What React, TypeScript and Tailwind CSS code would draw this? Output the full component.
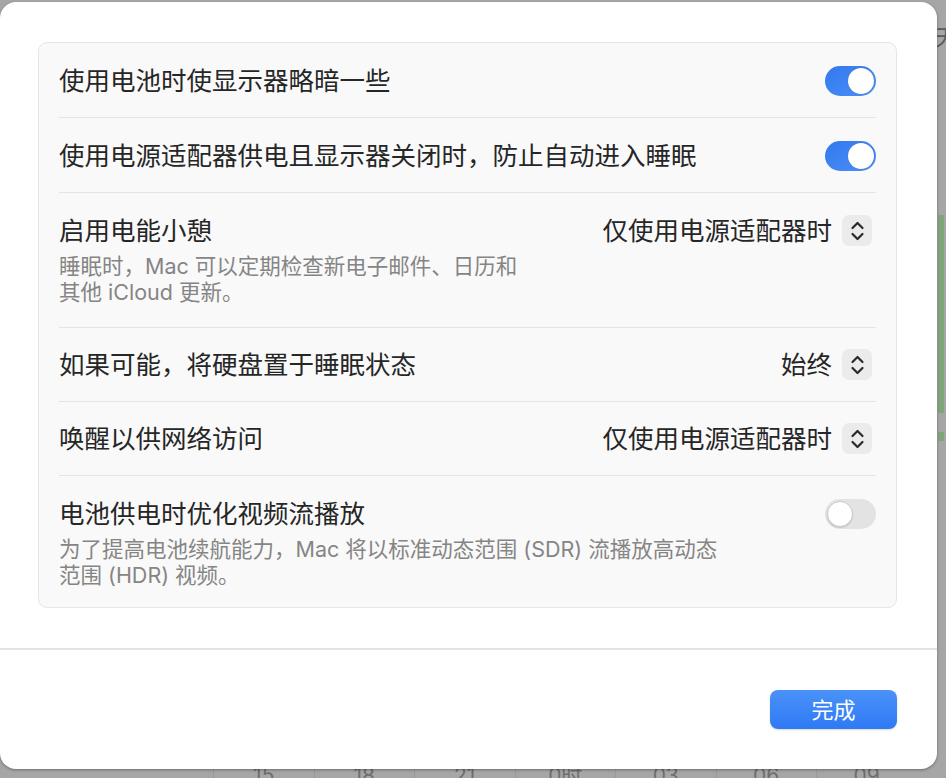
import React from 'react';

const FONT = 'font-["Inter","Noto_Sans_CJK_SC",sans-serif]';

function Toggle({ on }: { on: boolean }) {
  return on ? (
    <div className="w-[51px] h-[30px] rounded-full bg-gradient-to-br from-[#3479ef] to-[#4a8ff6] p-[2px] flex justify-end">
      <div className="w-[26px] h-[26px] rounded-full bg-white shadow-[0_0_1px_rgba(0,0,0,0.3)]" />
    </div>
  ) : (
    <div className="w-[51px] h-[30px] rounded-full bg-[#e3e3e3] p-[2px] flex justify-start">
      <div className="w-[26px] h-[26px] rounded-full bg-white border border-[#c9c9c9] shadow-[0_1px_1px_rgba(0,0,0,0.12)]" />
    </div>
  );
}

function Stepper({ value }: { value: string }) {
  return (
    <div className="flex items-center gap-[10px] mr-[4px]">
      <span className="text-[25.5px] leading-[31px] text-[#262626]">{value}</span>
      <div className="w-[30px] h-[31px] rounded-[7px] bg-[#ebebeb] flex items-center justify-center">
        <svg width="15" height="22" viewBox="0 0 15 22" fill="none" stroke="#2a2a2a" strokeWidth="2.2" strokeLinecap="round" strokeLinejoin="round">
          <path d="M2.5 8 L7.5 3 L12.5 8" />
          <path d="M2.5 14 L7.5 19 L12.5 14" />
        </svg>
      </div>
    </div>
  );
}

type Row = {
  title: string;
  sub?: string[];
  pad: string;
  control: React.ReactNode;
};

const rows: Row[] = [
  { title: '使用电池时使显示器略暗一些', pad: 'pt-[22px] pb-[21px]', control: <Toggle on /> },
  { title: '使用电源适配器供电且显示器关闭时，防止自动进入睡眠', pad: 'pt-[22px] pb-[21px]', control: <Toggle on /> },
  {
    title: '启用电能小憩',
    sub: ['睡眠时，Mac 可以定期检查新电子邮件、日历和', '其他 iCloud 更新。'],
    pad: 'pt-[22px] pb-[22px]',
    control: <Stepper value="仅使用电源适配器时" />,
  },
  { title: '如果可能，将硬盘置于睡眠状态', pad: 'pt-[21px] pb-[21px]', control: <Stepper value="始终" /> },
  { title: '唤醒以供网络访问', pad: 'pt-[21px] pb-[21px]', control: <Stepper value="仅使用电源适配器时" /> },
  {
    title: '电池供电时优化视频流播放',
    sub: ['为了提高电池续航能力，Mac 将以标准动态范围 (SDR) 流播放高动态', '范围 (HDR) 视频。'],
    pad: 'pt-[22px] pb-[19px]',
    control: <Toggle on={false} />,
  },
];

const axis = ['15', '18', '21', '0时', '03', '06', '09'];

export default function App() {
  return (
    <div className={`relative w-[946px] h-[778px] overflow-hidden bg-[#a6a6a6] ${FONT}`}>
      {/* window behind the sheet */}
      <div className="absolute right-0 top-[26px] w-[10px] text-[22px] leading-none text-[#5a5a5a] overflow-hidden">
        <span className="-ml-[1px]">天</span>
      </div>
      <div className="absolute left-[938px] top-[215px] w-[6px] h-[198px] bg-[#7ea678]" />
      <div className="absolute left-[938px] top-[432px] w-[6px] h-[9px] bg-[#7ea678]" />
      <div className="absolute left-[213px] top-[765px] flex text-[21px] leading-none text-[#6e6e6e]">
        {axis.map((a) => (
          <div key={a} className="w-[100.5px] flex justify-center border-l border-[#9a9a9a] h-[20px]">
            {a}
          </div>
        ))}
      </div>

      {/* sheet */}
      <div className="absolute left-0 top-[2px] w-[937px] h-[767px] rounded-[16px] bg-white shadow-[0_1px_3px_rgba(0,0,0,0.35)] flex flex-col">
        <div className="mt-[40px] mx-[38px] w-[859px] rounded-[9px] border border-[#e6e6e6] bg-[#f9f9f9]">
          <div className="mx-[20px] divide-y divide-[#e4e4e4]">
            {rows.map((r, i) => (
              <div key={i} className={`flex justify-between items-start ${r.pad}`}>
                <div className="flex flex-col">
                  <div className="text-[25.5px] leading-[31px] text-[#262626]">{r.title}</div>
                  {r.sub && (
                    <div className="mt-[7px] text-[21.5px] leading-[26px] text-[#858585]">
                      {r.sub.map((s) => (
                        <div key={s}>{s}</div>
                      ))}
                    </div>
                  )}
                </div>
                <div className="h-[31px] flex items-center">{r.control}</div>
              </div>
            ))}
          </div>
        </div>

        <div className="mt-[40px] border-t-[2px] border-[#e3e3e3] flex justify-end pt-[40px] pr-[40px]">
          <button className="w-[127px] h-[39px] rounded-[8px] bg-gradient-to-b from-[#4a91f8] to-[#2e7af5] text-white text-[22px] leading-none shadow-[0_1px_2px_rgba(0,0,0,0.15)]">
            完成
          </button>
        </div>
      </div>
    </div>
  );
}
